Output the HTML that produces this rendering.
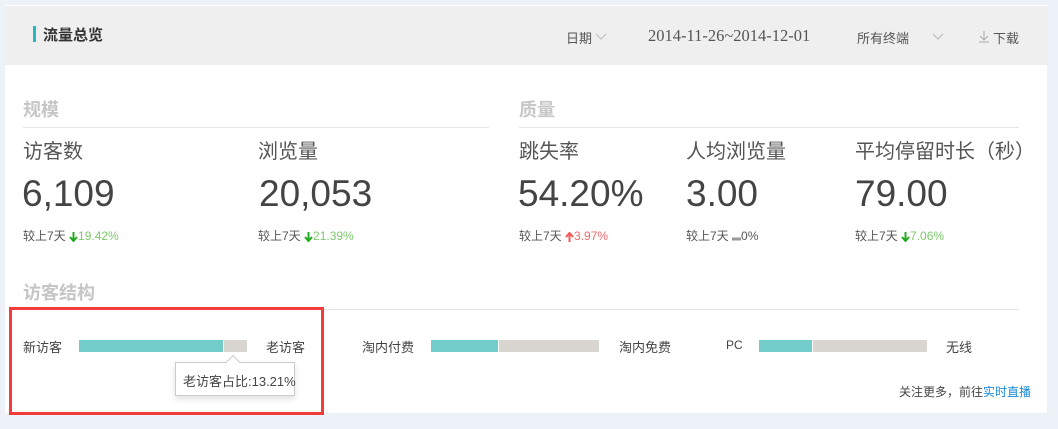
<!DOCTYPE html>
<html><head><meta charset="utf-8"><style>
*{margin:0;padding:0;box-sizing:border-box}
body{width:1058px;height:429px;background:#edf1f8;font-family:"Liberation Sans","Noto Sans CJK SC",sans-serif;position:relative;overflow:hidden;color:#555}
.a{position:absolute;white-space:nowrap}
.card{position:absolute;left:5px;top:5px;width:1042px;height:408px;background:#fff}
.hd{position:absolute;left:5px;top:6px;width:1042px;height:59px;background:#efefef}
.sec{font-size:18px;font-weight:bold;color:#c6c6c6}
.line{position:absolute;height:1px;background:#e4e4e4}
.lab{font-size:20px;color:#555}
.num{font-size:37px;color:#444;font-family:"Liberation Sans",sans-serif}
.cmp{font-size:12px;color:#555}
.g{color:#7cc96a}.r{color:#f06b6b}
.sm{font-size:13px;color:#444}
.bar{position:absolute;height:12px;background:#d9d6d1;top:340px;width:168px}
.bar i{display:block;height:12px;background:#72ccca}
svg{vertical-align:middle}
</style></head><body>
<div class="card"></div>
<div class="hd"></div>
<div class="a" style="left:33px;top:26px;width:3px;height:16px;background:#22b8c4"></div>
<div class="a" style="left:43px;top:24px;font-size:15px;font-weight:bold;color:#333">流量总览</div>
<div class="a sm" style="left:566px;top:28px;color:#555">日期</div>
<svg class="a" style="left:595px;top:33px" width="12" height="7"><path d="M1 1L6 6L11 1" fill="none" stroke="#bbb"/></svg>
<div class="a" style="left:648px;top:26px;font-size:16.5px;color:#555;font-family:'Liberation Serif',serif">2014-11-26~2014-12-01</div>
<div class="a sm" style="left:857px;top:28px;color:#555">所有终端</div>
<svg class="a" style="left:932px;top:33px" width="12" height="7"><path d="M1 1L6 6L11 1" fill="none" stroke="#bbb"/></svg>
<svg class="a" style="left:978px;top:30px" width="12" height="13"><path d="M6 1V10M2 6L6 10L10 6M1 12H11" fill="none" stroke="#aaa"/></svg>
<div class="a sm" style="left:993px;top:28px;color:#555">下载</div>

<div class="a sec" style="left:23px;top:96px">规模</div>
<div class="line" style="left:23px;top:127px;width:466px"></div>
<div class="a sec" style="left:519px;top:96px">质量</div>
<div class="line" style="left:519px;top:127px;width:500px"></div>

<div class="a lab" style="left:23px;top:135px">访客数</div>
<div class="a lab" style="left:258px;top:135px">浏览量</div>
<div class="a lab" style="left:519px;top:135px">跳失率</div>
<div class="a lab" style="left:686px;top:135px">人均浏览量</div>
<div class="a lab" style="left:855px;top:135px">平均停留时长（秒）</div>

<div class="a num" style="left:22px;top:173px">6,109</div>
<div class="a num" style="left:259px;top:173px">20,053</div>
<div class="a num" style="left:518px;top:173px">54.20%</div>
<div class="a num" style="left:686px;top:173px">3.00</div>
<div class="a num" style="left:855px;top:173px">79.00</div>

<div class="a cmp" style="left:23px;top:227px">较上7天 <svg width="9" height="10"><path d="M4.5 0V9M1 5L4.5 9L8 5" fill="none" stroke="#2a2" stroke-width="2"/></svg><span class="g">19.42%</span></div>
<div class="a cmp" style="left:258px;top:227px">较上7天 <svg width="9" height="10"><path d="M4.5 0V9M1 5L4.5 9L8 5" fill="none" stroke="#2a2" stroke-width="2"/></svg><span class="g">21.39%</span></div>
<div class="a cmp" style="left:519px;top:227px">较上7天 <svg width="9" height="10"><path d="M4.5 10V1M1 5L4.5 1L8 5" fill="none" stroke="#f55" stroke-width="2"/></svg><span class="r">3.97%</span></div>
<div class="a cmp" style="left:686px;top:227px">较上7天 <svg width="9" height="10"><path d="M0 7H9" stroke="#999" stroke-width="3"/></svg>0%</div>
<div class="a cmp" style="left:855px;top:227px">较上7天 <svg width="9" height="10"><path d="M4.5 0V9M1 5L4.5 9L8 5" fill="none" stroke="#2a2" stroke-width="2"/></svg><span class="g">7.06%</span></div>

<div class="a sec" style="left:23px;top:279px">访客结构</div>
<div class="line" style="left:23px;top:309px;width:996px"></div>

<div class="a sm" style="left:23px;top:337px">新访客</div>
<div class="bar" style="left:79px"><i style="width:145px;border-right:1px solid #fff"></i></div>
<div class="a sm" style="left:266px;top:337px">老访客</div>
<div class="a sm" style="left:362px;top:337px">淘内付费</div>
<div class="bar" style="left:431px"><i style="width:68px;border-right:1px solid #fff"></i></div>
<div class="a sm" style="left:619px;top:337px">淘内免费</div>
<div class="a sm" style="left:726px;top:338px;font-size:12px">PC</div>
<div class="bar" style="left:759px"><i style="width:54px;border-right:1px solid #fff"></i></div>
<div class="a sm" style="left:946px;top:337px">无线</div>

<div class="a" style="left:175px;top:362px;width:120px;height:34px;border:1px solid #ccc;background:#fff;box-shadow:0 3px 6px rgba(0,0,0,.12)"></div>
<div class="a" style="left:228px;top:357px;width:10px;height:10px;background:#fff;border-left:1px solid #ccc;border-top:1px solid #ccc;transform:rotate(45deg)"></div>
<div class="a sm" style="left:183px;top:371px">老访客占比:13.21%</div>

<div class="a" style="left:9px;top:307px;width:315px;height:108px;border:3px solid #f33b3b"></div>

<div class="a" style="right:27px;top:383px;font-size:12px;color:#444">关注更多，前往<span style="color:#1a8ad8">实时直播</span></div>
</body></html>
